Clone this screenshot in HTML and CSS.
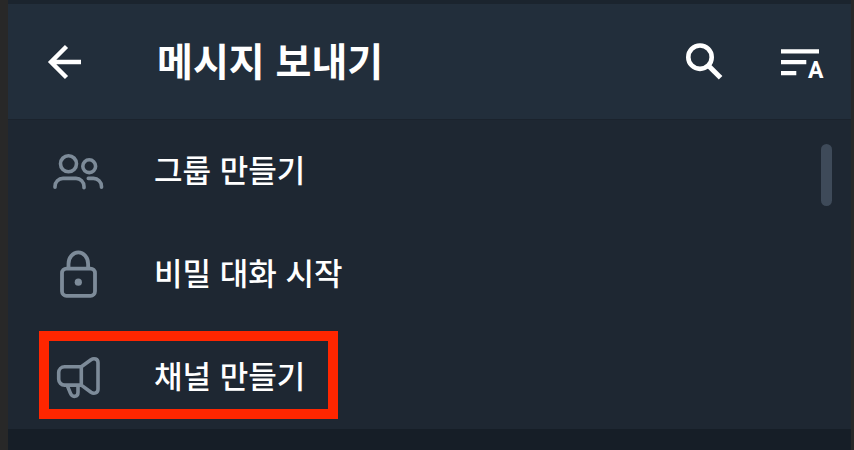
FILE: index.html
```html
<!DOCTYPE html>
<html lang="ko">
<head>
<meta charset="utf-8">
<meta name="viewport" content="width=device-width, initial-scale=1">
<title>메시지 보내기</title>
<link rel="stylesheet" href="styles.css">
</head>
<body>
<div class="app">
  <header class="bar">
    <button class="icon-button" type="button" aria-label="뒤로">
      <svg width="36" height="36" viewBox="0 0 36 36" fill="none" stroke="currentColor" stroke-width="4.4"><path d="M34 18H4M19.500 2.500 4 18l15.500 15.500"/></svg>
    </button>
    <h1 class="title">메시지 보내기</h1>
    <div class="actions">
      <button class="icon-button" type="button" aria-label="검색">
        <svg width="40" height="40" viewBox="0 0 40 40" fill="none" stroke="currentColor"><circle cx="16" cy="15.2" r="11.7" stroke-width="4.6"/><path d="m24 23.200 12.600 12.600" stroke-width="5"/></svg>
      </button>
      <button class="icon-button" type="button" aria-label="이름순 정렬">
        <svg width="48" height="48" viewBox="0 -4 48 48" fill="currentColor"><path d="M1 7.200h38v4.300H1zM1 18h25.300v4.300H1zM1 29h15.300v4.300H1z"/><text class="sort-letter" x="28" y="36">A</text></svg>
      </button>
    </div>
  </header>
  <main class="content">
    <ul class="menu">
      <li>
        <button class="item" type="button">
          <svg class="item-icon" width="56" height="56" viewBox="0 0 56 56" fill="none" stroke="currentColor" stroke-width="3.6" stroke-linecap="round"><circle cx="18.5" cy="20.8" r="8"/><circle cx="39.2" cy="23.2" r="6.4"/><path d="M5 44.2v-.8a8 8 0 0 1 8-8h13a8 8 0 0 1 8 8v1.4M38.3 35.4h5.2a8 8 0 0 1 8 8v.8"/></svg>
          <span>그룹 만들기</span>
        </button>
      </li>
      <li>
        <button class="item" type="button">
          <svg class="item-icon" width="56" height="56" viewBox="0 0 56 56" fill="none" stroke="currentColor" stroke-width="3.8"><rect x="12" y="22.6" width="33" height="27.2" rx="4.5"/><path d="M18.500 22.400v-4.500a9.800 11.500 0 0 1 19.600 0v4.500"/><circle cx="28.3" cy="36.2" r="3.6" fill="currentColor" stroke="none"/></svg>
          <span>비밀 대화 시작</span>
        </button>
      </li>
      <li class="highlighted">
        <button class="item" type="button">
          <svg class="item-icon" width="56" height="56" viewBox="0 0 56 56" fill="none" stroke="currentColor" stroke-width="3.6" stroke-linejoin="round"><path d="M31.300 17.700H14.600a5.900 5.900 0 0 0-5.900 5.900v6.600a5.900 5.900 0 0 0 5.900 5.900h16.700M31.300 17.700v18.400L41 43.200c3 2 7 .8 7-3V13.700c0-3.800-4-5-7-3zM17.300 36.600l3.200 7.800c2 4.600 7.500 3.600 7.500-1.200v-6.600"/></svg>
          <span>채널 만들기</span>
        </button>
      </li>
    </ul>
    <div class="scroll-thumb"></div>
  </main>
</div>
</body>
</html>
```
FILE: styles.css
```css
* {
  box-sizing: border-box;
}

body {
  margin: 0;
  background: #282828;
  color: #fff;
  font-family: "Noto Sans CJK KR", sans-serif;
}

.app {
  min-height: 100vh;
  margin: 0 3px 0 8px;
  padding-top: 4px;
  background: linear-gradient(#1b242e 4px, #161e27 4px);
}

.bar {
  display: flex;
  align-items: center;
  height: 115px;
  padding: 0 23px 0 39px;
  background: #222e3b;
}

.icon-button {
  display: flex;
  padding: 0;
  border: 0;
  background: none;
  color: #fff;
}

.title {
  margin: 0 0 0 74px;
  padding-bottom: 6px;
  font-size: 39px;
  font-weight: 700;
  line-height: 56px;
}

.actions {
  display: flex;
  align-items: center;
  gap: 56px;
  margin-left: auto;
}

.sort-letter {
  font: 700 23px Roboto, sans-serif;
}

.content {
  position: relative;
  background: #1e2732;
  border-top: 1px solid #1b232d;
}

.menu {
  margin: 0;
  padding: 0;
  list-style: none;
}

.item {
  display: flex;
  align-items: center;
  gap: 48px;
  width: 100%;
  height: 103px;
  padding: 0 42px 2px;
  border: 0;
  background: none;
  color: #fff;
  font: 500 31px/48px "Noto Sans CJK KR", sans-serif;
  text-align: left;
}

.item span {
  padding-bottom: 4px;
}

.item-icon {
  color: #7d8b99;
}

.highlighted {
  position: relative;
}

/* Callout frame around the channel entry */
.highlighted::after {
  content: "";
  position: absolute;
  box-sizing: border-box;
  top: 5px;
  left: 31px;
  width: 299px;
  height: 88px;
  border: 10px solid #ff2600;
  pointer-events: none;
}

.scroll-thumb {
  position: absolute;
  top: 24px;
  right: 19px;
  width: 11px;
  height: 62px;
  border-radius: 6px;
  background: #3e4a59;
}
```
